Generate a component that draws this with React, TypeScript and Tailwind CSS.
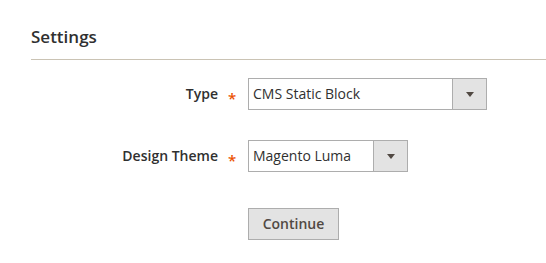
import React from "react";

function Arrow() {
  return (
    <svg width="8" height="5" viewBox="0 0 8 5" className="block">
      <path d="M0 0H8L4 5Z" fill="#514943" />
    </svg>
  );
}

function Select({ value, width }: { value: string; width: string }) {
  return (
    <div className={`flex h-[32px] border border-[#adadad] bg-white ${width}`}>
      <div className="flex-1 flex items-center pl-[4px] text-[14px] leading-[20px] text-[#303030]">
        {value}
      </div>
      <div className="w-[34px] border-l border-[#adadad] bg-[#e3e3e3] flex items-center justify-center">
        <Arrow />
      </div>
    </div>
  );
}

function Row({ label, children }: { label: string; children: React.ReactNode }) {
  return (
    <div className="flex items-center">
      <div className="w-[218px] text-right text-[14px] leading-[20px] font-semibold text-[#303030]">
        {label}
      </div>
      <div className="w-[30px] pl-[10px] mt-[8px] text-[15px] leading-[20px] font-semibold text-[#eb5202]">*</div>
      {children}
    </div>
  );
}

export default function App() {
  return (
    <div
      className="w-[546px] h-[263px] bg-white overflow-hidden"
      style={{ fontFamily: '"Open Sans", "Liberation Sans", sans-serif' }}
    >
      <div className="ml-[31px] pt-[27px] pb-[12px] border-b border-[#cac3b4] text-[17px] leading-[20px] font-semibold text-[#303030]">
        Settings
      </div>
      <div className="mt-[18px] flex flex-col gap-[30px]">
        <Row label="Type">
          <Select value="CMS Static Block" width="w-[239px]" />
        </Row>
        <Row label="Design Theme">
          <Select value="Magento Luma" width="w-[160px]" />
        </Row>
      </div>
      <div className="mt-[36px] pl-[248px]">
        <button className="h-[32px] w-[91px] border border-[#adadad] bg-[#e3e3e3] text-[14px] leading-[20px] font-semibold text-[#514943]">
          Continue
        </button>
      </div>
    </div>
  );
}
